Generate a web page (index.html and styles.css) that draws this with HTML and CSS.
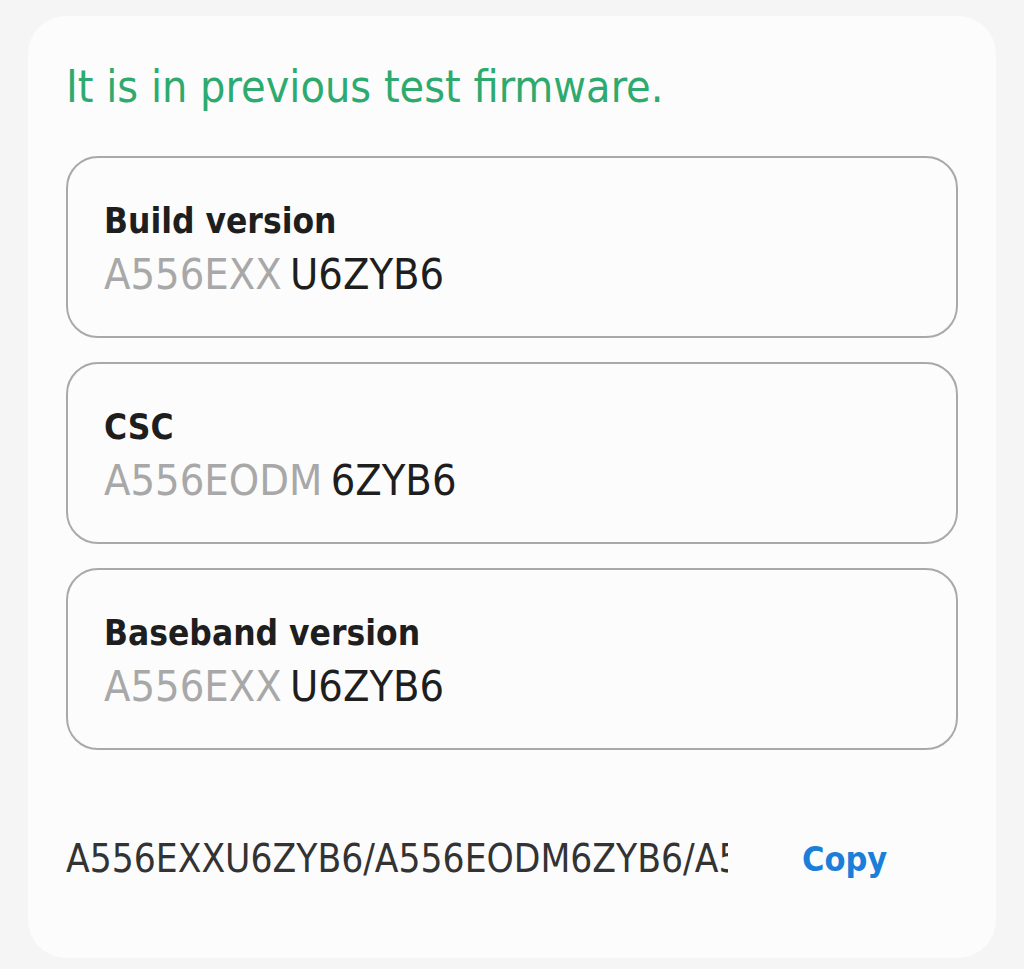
FILE: index.html
```html
<!DOCTYPE html>
<html lang="en">
<head>
    <meta charset="UTF-8">
    <title>Software information</title>
    <link rel="stylesheet" href="styles.css">
</head>
<body>
    <div class="card">
        <p class="notice">It is in previous test firmware.</p>

        <div class="info-box">
            <div class="info-title">Build version</div>
            <div class="info-value"><span class="dim">A556EXX</span> U6ZYB6</div>
        </div>
        <div class="info-box">
            <div class="info-title">CSC</div>
            <div class="info-value"><span class="dim">A556EODM</span> 6ZYB6</div>
        </div>
        <div class="info-box">
            <div class="info-title">Baseband version</div>
            <div class="info-value"><span class="dim">A556EXX</span> U6ZYB6</div>
        </div>

        <div class="copy-row">
            <div class="full-version">A556EXXU6ZYB6/A556EODM6ZYB6/A556EXXU6ZYB6</div>
            <button class="copy-button">Copy</button>
        </div>
    </div>
</body>
</html>
```

FILE: styles.css
```css
body {
    margin: 0;
    background-color: #f5f5f5;
    font-family: "DejaVu Sans Condensed", "Noto Sans", sans-serif;
    padding: 16px 28px 11px 28px;
}
.card {
    background-color: #fcfcfc;
    border-radius: 38px;
    padding: 45px 38px 60px 38px;
    height: 942px;
    box-sizing: border-box;
}
.notice {
    color: #2eaa6e;
    font-size: 44.5px;
    margin: 0 0 43px 0;
    line-height: 52px;
}
.info-box {
    border: 2px solid #a9a9a9;
    border-radius: 32px;
    height: 182px;
    box-sizing: border-box;
    padding: 41px 36px 0 36px;
    margin-bottom: 24px;
}
.info-title {
    font-size: 35px;
    font-weight: bold;
    color: #1e1e1e;
    line-height: 44px;
}
.info-value {
    font-size: 43px;
    color: #1e1e1e;
    line-height: 56px;
    margin-top: 3px;
    word-spacing: -4px;
}
.info-value .dim {
    color: #a8a8a8;
}
.copy-row {
    display: flex;
    align-items: center;
    margin-top: 86px;
}
.full-version {
    width: 662px;
    overflow: hidden;
    white-space: nowrap;
    font-size: 38.5px;
    color: #333;
}
.copy-button {
    margin-left: 74px;
    background: none;
    border: none;
    padding: 0;
    font-family: inherit;
    font-size: 34px;
    font-weight: bold;
    color: #1a7fd9;
}
```
